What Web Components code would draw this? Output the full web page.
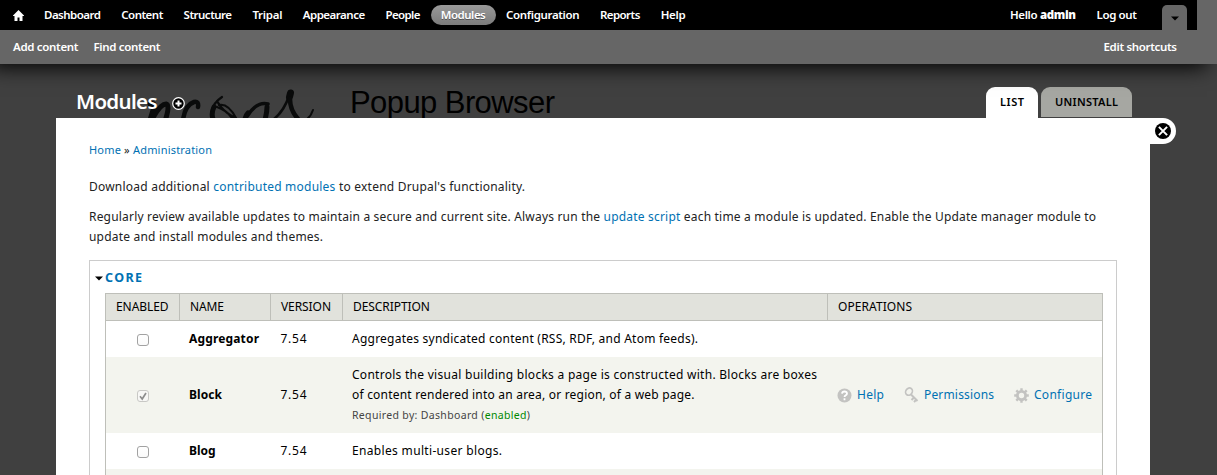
<!DOCTYPE html>
<html lang="en"><head><meta charset="utf-8"><title>Modules</title>
<style>
html,body{margin:0;height:475px;overflow:hidden}
body{background:#404040;font:12px/20px "Noto Sans","Open Sans",sans-serif;color:#000}
</style></head><body>
<drupal-page></drupal-page>
<script>
// Inline text run that is tracked to a given advance width.
class FitText extends HTMLElement{
  connectedCallback(){
    const r=this.attachShadow({mode:'open'});
    r.innerHTML='<style>:host{display:inline-block;white-space:pre;vertical-align:baseline}span{display:inline-block}</style><span><slot></slot></span>';
    const w=+this.getAttribute('w'),s=r.querySelector('span'),n=this.textContent.length;
    const nat=s.getBoundingClientRect().width;
    s.style.letterSpacing=((w-nat)/(n-1)).toFixed(3)+'px';
    this.style.width=w+'px';
  }
}
customElements.define('fit-text',FitText);

const define=(name,html)=>customElements.define(name,class extends HTMLElement{
  connectedCallback(){ if(!this.shadowRoot) this.attachShadow({mode:'open'}).innerHTML=html; }
});

define('admin-toolbar',`<style>
:host{display:block;position:relative;z-index:3;height:64px;color:#fff;font-weight:600;font-size:11.5px}
:host::before{content:"";position:absolute;z-index:-1;left:-10px;right:10px;top:0;height:64px;box-shadow:0 3px 20px #000}
.bar{display:flex;height:30px;width:1197px;background:#000;align-items:center;box-sizing:border-box;padding-left:13px}
.wrap{background:#666;height:64px}
.home{width:11px;height:11px;margin-right:10px}
nav{display:flex;gap:.3px;flex:1}
nav span{padding:0 10px;height:20px;line-height:20px;border-radius:10px}
nav .on{background:linear-gradient(#999,#7c7c7c);text-shadow:0 1px 0 #555}
.user{display:flex;gap:20.5px;padding-right:25px}
.toggle{align-self:flex-end;width:25px;height:25px;background:#666;border-radius:5px 5px 0 0;margin-right:10px;display:grid;place-items:center}
.toggle svg{margin-top:1px}
.short{display:flex;gap:15px;padding:0 40px 0 13px;height:34px;line-height:34px}
.short :last-child{margin-left:auto}
</style><div class="wrap">
<div class="bar"><svg class="home" viewBox="0 0 11 11"><path fill="#fff" d="M5.5 0 11 5.5V6H9.5v5h-3V7.5h-2V11h-3V6H0v-.5z"/></svg>
<nav><span><fit-text w="57">Dashboard</fit-text></span><span><fit-text w="42">Content</fit-text></span><span><fit-text w="48.5">Structure</fit-text></span><span><fit-text w="30">Tripal</fit-text></span><span><fit-text w="62.5">Appearance</fit-text></span><span><fit-text w="35">People</fit-text></span><span class="on"><fit-text w="45">Modules</fit-text></span><span><fit-text w="73.5">Configuration</fit-text></span><span><fit-text w="40.5">Reports</fit-text></span><span><fit-text w="25">Help</fit-text></span></nav>
<div class="user"><span><fit-text w="66">Hello <b>admin</b></fit-text></span><fit-text w="40.5">Log out</fit-text></div>
<div class="toggle"><svg width="8" height="5" viewBox="0 0 8 5"><path d="M0 .5h8L4 4.5z"/></svg></div></div>
<div class="short"><fit-text w="65.5">Add content</fit-text><fit-text w="67">Find content</fit-text><fit-text w="73.5">Edit shortcuts</fit-text></div></div>`);

define('site-backdrop',`<style>
:host{position:absolute;z-index:0;left:0;top:64px;width:1217px;height:60px;color:#000}
svg{position:absolute;left:140px;top:16px}
div{position:absolute;left:350px;top:21px;font:31px/36px "Liberation Sans",sans-serif}
</style><svg width="190" height="38" viewBox="140 80 190 38" fill="none" stroke="#0a0b0b" stroke-linecap="round">
<path stroke-width="5" d="M150 104q5-2 4 3l-4 13M154 116q7-12 12-12 4 1 0 14"/>
<path stroke-width="4.5" d="M198 107q1-6-4-5-9 3-11 18"/>
<path stroke-width="5" d="M214 107q-3 6-1 12"/>
<path stroke-width="2.2" d="M222 97q-9 6-10 14M217 101q5 10 18 17M217 107q9 3 15 11M219 105q9-2 17 13"/>
<path stroke-width="3.5" d="M268 104q-12-3-22 14"/><path stroke-width="5" d="M267 107q0 5-2 13M248 113q-3 3-3 7"/><path stroke-width="2.5" d="M274 119q10-8 15-23"/>
<path stroke-width="7" d="M290.5 93l-1 4"/><path stroke-width="4.5" d="M290 99q0 11 8 20"/><path stroke-width="2" d="M313 110q-2 6-6 9"/></svg><div><fit-text w="205">Popup Browser</fit-text></div>`);

define('overlay-header',`<style>
:host{display:flex;position:relative;z-index:1;height:54px;padding:0 85px 0 76px;align-items:flex-end;color:#fff}
h1{margin:0 0 2px;font-size:20.5px;line-height:30px;font-weight:600}
.plus{margin:0 auto 8px 14px;width:13px;height:13px}
.tab{box-sizing:border-box;height:31px;border-radius:9px 9px 0 0;padding:0 14px;font-weight:600;font-size:11px;line-height:30px;color:#000;background:#fff}
.tab.off{height:30px;margin:0 0 1px 3px;background:#a6a7a2}
</style><h1><fit-text w="81.5">Modules</fit-text></h1><svg class="plus" viewBox="0 0 13 13"><circle cx="6.5" cy="6.5" r="5.8" fill="#000" stroke="#fff" stroke-width="1.2"/><path d="M6.5 3.5v6M3.5 6.5h6" stroke="#fff" stroke-width="2"/></svg>
<div class="tab"><fit-text w="24">LIST</fit-text></div><div class="tab off"><fit-text w="63">UNINSTALL</fit-text></div>`);

define('overlay-close',`<style>:host{position:absolute;left:1094px;top:0;width:26px;height:26px;border-radius:0 13px 13px 0;background:#fff}svg{display:block;margin:5px}</style>
<svg width="16" height="16" viewBox="0 0 16 16"><circle cx="8" cy="8" r="8"/><path d="M3.9 3.9l8.2 8.2M12.1 3.9l-8.2 8.2" stroke="#fff" stroke-width="2"/></svg>`);

define('check-box',`<style>:host{display:block;box-sizing:border-box;width:12px;height:12px;border:1px solid #a2a2a2;border-radius:3px;background:linear-gradient(#fff,#fafafa);margin-top:2px}svg{display:none}:host([checked]){border-color:#c8c8c5;background:#f7f7f5}:host([checked]) svg{display:block}</style><svg width="10" height="10" viewBox="0 0 10 10"><path d="M2 5.3 4.2 8 8 2" fill="none" stroke="#8d8d8d" stroke-width="1.7"/></svg>`);

define('module-row',`<style>
:host{display:grid;grid-template-columns:74px 91px 72px 485px 1fr;height:36px;align-items:center;background:#fff;box-sizing:border-box}
:host([even]){background:#f3f4ee}:host([tall]){height:76px}
.c{display:flex;justify-content:center}.n{font-weight:700;padding-left:9px}.v{padding-left:9.5px}.d{padding-left:9px}.o{padding-left:9px}
</style><div class="c"><slot name="check"></slot></div><div class="n"><slot name="name"></slot></div><div class="v"><slot name="version"></slot></div><div class="d"><slot name="description"></slot></div><div class="o"><slot name="ops"></slot></div>`);

define('module-ops',`<style>:host{display:flex;color:#0071b3;align-items:center}svg{width:16px;height:16px;margin-right:4px;flex:none}fit-text{margin-right:20px}</style>
<svg viewBox="0 0 16 16"><circle cx="7.5" cy="8.5" r="7" fill="#c3c3c1"/><path d="M5 6.7q.2-2.2 2.5-2.2T10 6.5q0 1-1.2 1.8T7.5 10M7.5 11.3v1.9" fill="none" stroke="#fff" stroke-width="1.8"/></svg><fit-text w="27">Help</fit-text>
<svg viewBox="0 0 16 16" fill="none" stroke="#c3c3c1"><ellipse cx="5" cy="4.6" rx="3.2" ry="3.8" transform="rotate(35 5 4.6)" stroke-width="1.7"/><path d="M7 7.5l6.5 6.5M10 10.5l-2.5 2.5M12.5 12.5l-2.5 2.5" stroke-width="2"/></svg><fit-text w="70">Permissions</fit-text>
<svg viewBox="0 0 16 16"><g transform="translate(7.5 8.5)" fill="none" stroke="#c3c3c1"><circle r="4.1" stroke-width="2.8"/><path d="M0-7.3v3M0 7.3v-3M-7.3 0h3M7.3 0h-3M-5.2-5.2l2 2M5.2 5.2l-2-2M-5.2 5.2l2-2M5.2-5.2l-2 2" stroke-width="2.4"/></g></svg><fit-text w="58">Configure</fit-text>`);

define('module-table',`<style>
:host{display:block;width:998px;box-sizing:border-box;border:1px solid #bebfb9;border-bottom:0;height:190px}
.h{display:grid;grid-template-columns:73px 90px 71px 484px 1fr;gap:1px;height:26px;line-height:26px;background:#bebfb9;border-bottom:1px solid #bebfb9}
.h span{background:#e1e2dc;padding-left:10px}
small{font-size:10.5px;line-height:20px;color:#444;display:block}
p{margin:0;display:block;height:20px}i{font-style:normal;color:#080}
</style><div class="h"><span><fit-text w="52.5">ENABLED</fit-text></span><span><fit-text w="34">NAME</fit-text></span><span><fit-text w="50">VERSION</fit-text></span><span><fit-text w="77">DESCRIPTION</fit-text></span><span><fit-text w="74">OPERATIONS</fit-text></span></div>
<module-row><check-box slot="check"></check-box><fit-text slot="name" w="70">Aggregator</fit-text><fit-text slot="version" w="26">7.54</fit-text><fit-text slot="description" w="346">Aggregates syndicated content (RSS, RDF, and Atom feeds).</fit-text></module-row>
<module-row even tall><check-box checked slot="check"></check-box><fit-text slot="name" w="33">Block</fit-text><fit-text slot="version" w="26">7.54</fit-text><div slot="description"><p><fit-text w="465">Controls the visual building blocks a page is constructed with. Blocks are boxes</fit-text></p><p><fit-text w="342.5">of content rendered into an area, or region, of a web page.</fit-text></p><small><fit-text w="178">Required by: Dashboard (<i>enabled</i>)</fit-text></small></div><module-ops slot="ops"></module-ops></module-row>
<module-row><check-box slot="check"></check-box><fit-text slot="name" w="26.5">Blog</fit-text><fit-text slot="version" w="26">7.54</fit-text><fit-text slot="description" w="150">Enables multi-user blogs.</fit-text></module-row>
<module-row even></module-row>`);

define('module-fieldset',`<style>
:host{display:block;box-sizing:border-box;width:1028px;height:230px;border:1px solid #ccc;border-bottom:0;padding:7px 0 0 15px;margin-top:13px}
.t{display:flex;align-items:center;height:20px;margin:0 0 5px -10.5px;color:#0071b3;font-weight:700;font-size:12.5px}
svg{margin-right:2.5px}
</style><div class="t"><svg width="8" height="5" viewBox="0 0 8 5"><path d="M0 .5h8L4 4.5z"/></svg><fit-text w="37">CORE</fit-text></div><module-table></module-table>`);

define('module-overlay',`<style>
:host{display:block;position:relative;z-index:1;box-sizing:border-box;background:#fff;width:1094px;height:357px;margin-left:56px;padding:22px 33px 0}
a{color:#0071b3}.crumb{font-size:11px;color:#222}p{margin:0}.crumb+p{margin-top:17px}.rev{margin-top:10px}p{color:#222}p span{display:block;height:20px}
</style><overlay-close></overlay-close>
<div class="crumb"><fit-text w="123"><a>Home</a> » <a>Administration</a></fit-text></div>
<p><span><fit-text w="436">Download additional <a>contributed modules</a> to extend Drupal's functionality.</fit-text></span></p>
<p class="rev"><span><fit-text w="1007">Regularly review available updates to maintain a secure and current site. Always run the <a>update script</a> each time a module is updated. Enable the Update manager module to</fit-text></span><span><fit-text w="234">update and install modules and themes.</fit-text></span></p>
<module-fieldset></module-fieldset>`);

define('drupal-page',`<style>:host{display:block;position:relative;width:1217px;height:475px;overflow:hidden}</style>
<admin-toolbar></admin-toolbar><site-backdrop></site-backdrop><overlay-header></overlay-header><module-overlay></module-overlay>`);
</script></body></html>
